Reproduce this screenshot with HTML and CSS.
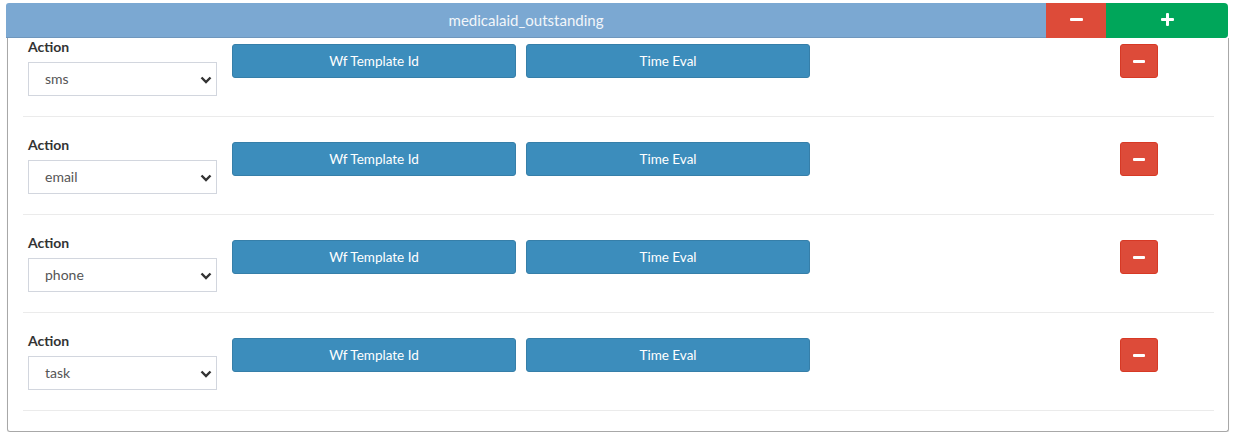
FILE: index.html
```html
<!DOCTYPE html>
<html>
<head>
<meta charset="utf-8">
<link rel="stylesheet" href="styles.css">
</head>
<body>
<div class="wrap">
  <div class="box-header">
    <div class="title">medicalaid_outstanding</div>
    <div class="hbtn hbtn-red"><span class="dash"></span></div>
    <div class="hbtn hbtn-green"><span class="plus"></span></div>
  </div>
  <div class="panel">
    <div class="row first">
      <div class="field">
        <label class="lbl">Action</label>
        <div class="select"><span>sms</span><svg class="chev" width="12" height="8" viewBox="0 0 12 8"><path d="M1.5 1.5 L6 6 L10.5 1.5" fill="none" stroke="#333" stroke-width="2.4"/></svg></div>
      </div>
      <div class="btn btn-blue">Wf Template Id</div>
      <div class="btn btn-blue">Time Eval</div>
      <div class="spacer"></div>
      <div class="btn-del"><span class="dash"></span></div>
    </div>
    <div class="row">
      <div class="field">
        <label class="lbl">Action</label>
        <div class="select"><span>email</span><svg class="chev" width="12" height="8" viewBox="0 0 12 8"><path d="M1.5 1.5 L6 6 L10.5 1.5" fill="none" stroke="#333" stroke-width="2.4"/></svg></div>
      </div>
      <div class="btn btn-blue">Wf Template Id</div>
      <div class="btn btn-blue">Time Eval</div>
      <div class="spacer"></div>
      <div class="btn-del"><span class="dash"></span></div>
    </div>
    <div class="row">
      <div class="field">
        <label class="lbl">Action</label>
        <div class="select"><span>phone</span><svg class="chev" width="12" height="8" viewBox="0 0 12 8"><path d="M1.5 1.5 L6 6 L10.5 1.5" fill="none" stroke="#333" stroke-width="2.4"/></svg></div>
      </div>
      <div class="btn btn-blue">Wf Template Id</div>
      <div class="btn btn-blue">Time Eval</div>
      <div class="spacer"></div>
      <div class="btn-del"><span class="dash"></span></div>
    </div>
    <div class="row">
      <div class="field">
        <label class="lbl">Action</label>
        <div class="select"><span>task</span><svg class="chev" width="12" height="8" viewBox="0 0 12 8"><path d="M1.5 1.5 L6 6 L10.5 1.5" fill="none" stroke="#333" stroke-width="2.4"/></svg></div>
      </div>
      <div class="btn btn-blue">Wf Template Id</div>
      <div class="btn btn-blue">Time Eval</div>
      <div class="spacer"></div>
      <div class="btn-del"><span class="dash"></span></div>
    </div>
  </div>
</div>
</body>
</html>
```

FILE: styles.css
```css
html, body {
  margin: 0;
  padding: 0;
  background: #fff;
  font-family: Lato, "Open Sans", "Liberation Sans", sans-serif;
  color: #333;
}

.wrap {
  padding: 3px 0 0 6px;
  width: 1223px;
}

.box-header {
  display: flex;
  height: 35px;
  width: 1222px;
  border-radius: 3px 4px 4px 0;
  overflow: hidden;
  box-shadow: inset 0 -1px 0 #6a93bb;
}

.title {
  flex: 1;
  background: #7ba8d2;
  color: #f2f6fa;
  font-size: 15px;
  display: flex;
  align-items: center;
  justify-content: center;
  padding-bottom: 1px;
  box-shadow: inset 0 -1px 0 #6f97bd;
}

.hbtn {
  display: flex;
  align-items: center;
  justify-content: center;
  padding-bottom: 2px;
}

.hbtn-red {
  width: 60px;
  background: #dd4b39;
}

.hbtn-green {
  width: 122px;
  background: #00a65a;
}

.dash {
  display: block;
  width: 13px;
  height: 3px;
  background: #fff;
  border-radius: 1px;
}

.plus {
  position: relative;
  display: block;
  width: 13px;
  height: 13px;
}

.plus::before,
.plus::after {
  content: "";
  position: absolute;
  background: #fff;
  border-radius: 1px;
}

.plus::before {
  left: 0;
  top: 5px;
  width: 13px;
  height: 3px;
}

.plus::after {
  left: 5px;
  top: 0;
  width: 3px;
  height: 13px;
}

.panel {
  margin-left: 1px;
  width: 1220px;
  border: 1px solid #a8a8a8;
  border-top: none;
  border-radius: 0 0 3px 3px;
  padding: 0 0 20px 0;
  box-shadow: 0 1px 1px rgba(0,0,0,0.08);
}

.row {
  display: flex;
  align-items: flex-start;
  margin: 0 14px 0 15px;
  padding: 20px 0 20px 5px;
  border-bottom: 1px solid #ebebeb;
}

.row.first {
  padding-top: 1px;
}

.field {
  width: 189px;
  margin-right: 15px;
}

.lbl {
  display: block;
  height: 18px;
  line-height: 16px;
  font-size: 14px;
  font-weight: 700;
  color: #333;
  margin-bottom: 5px;
}

.select {
  box-sizing: border-box;
  height: 34px;
  border: 1px solid #d2d6de;
  display: flex;
  align-items: center;
  padding: 0 4px 1px 16px;
  font-size: 14px;
  color: #555;
}

.select span {
  flex: 1;
  padding-bottom: 1px;
}

.chev {
  display: block;
  margin-top: 2px;
}

.btn {
  box-sizing: border-box;
  margin-top: 5px;
  height: 34px;
  width: 284px;
  display: flex;
  align-items: center;
  justify-content: center;
  padding-bottom: 1px;
  font-size: 13.5px;
  font-weight: 400;
  color: #fff;
  border-radius: 3px;
}

.btn-blue {
  background: #3c8dbc;
  border: 1px solid #367fa9;
}

.btn-blue + .btn-blue {
  margin-left: 10px;
}

.spacer {
  flex: 1;
}

.btn-del {
  box-sizing: border-box;
  margin-top: 5px;
  margin-right: 56px;
  width: 38px;
  height: 34px;
  background: #dd4b39;
  border: 1px solid #d73925;
  border-radius: 3px;
  display: flex;
  align-items: center;
  justify-content: center;
}

.btn-del .dash {
  width: 12px;
}
```
